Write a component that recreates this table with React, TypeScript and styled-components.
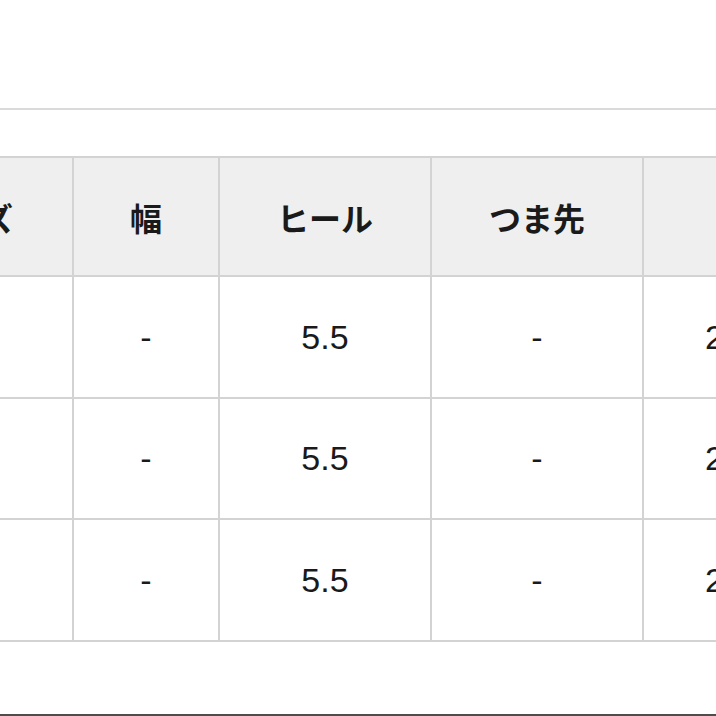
import React from 'react';
import styled, {createGlobalStyle} from 'styled-components';

const GlobalStyle = createGlobalStyle`
  html, body {
    margin: 0;
    padding: 0;
    background: #ffffff;
  }
  body {
    font-family: "Liberation Sans", "Noto Sans CJK JP", sans-serif;
    color: #1a1a1a;
  }
`;

const Page = styled.div`
  width: 716px;
  height: 716px;
  display: flex;
  flex-direction: column;
  overflow: hidden;
  background: #ffffff;
`;

const TopSpace = styled.div`
  height: 108px;
  flex-shrink: 0;
`;

const Rule = styled.div<{$color: string}>`
  height: 2px;
  flex-shrink: 0;
  background: ${p => p.$color};
`;

const TableWrap = styled.div`
  margin-top: 46px;
  width: 716px;
  overflow: hidden;
  flex-shrink: 0;
`;

const Grid = styled.div`
  display: grid;
  grid-template-columns: 215px 146px 212px 212px 190px;
  grid-template-rows: 119px 122px 121px 122px;
  width: max-content;
  margin-left: -141px;
  border-top: 2px solid #d3d3d3;
`;

const Cell = styled.div<{$head?: boolean}>`
  box-sizing: border-box;
  display: flex;
  align-items: center;
  justify-content: center;
  border-right: 2px solid #d3d3d3;
  border-bottom: 2px solid #d3d3d3;
  background: ${p => (p.$head ? '#efefef' : '#ffffff')};
  font-family: ${p => (p.$head
    ? '"Noto Sans CJK JP", "Liberation Sans", sans-serif'
    : '"Liberation Sans", "Noto Sans CJK JP", sans-serif')};
  font-size: ${p => (p.$head ? '32px' : '34px')};
  font-weight: ${p => (p.$head ? 700 : 400)};
  color: #1a1a1a;
  white-space: nowrap;
`;

const Filler = styled.div`
  flex: 1;
`;

const headers = ['サイズ', '幅', 'ヒール', 'つま先', '丈'];

const rows = [
  ['22.5', '-', '5.5', '-', '22.5'],
  ['23.5', '-', '5.5', '-', '23.5'],
  ['24.5', '-', '5.5', '-', '24.5'],
];

export default function App() {
  return (
    <Page>
      <GlobalStyle />
      <TopSpace />
      <Rule $color="#dadada" />
      <TableWrap>
        <Grid>
          {headers.map((h, i) => (
            <Cell $head key={`h${i}`}>{h}</Cell>
          ))}
          {rows.map((row, r) =>
            row.map((v, c) => <Cell key={`r${r}c${c}`}>{v}</Cell>)
          )}
        </Grid>
      </TableWrap>
      <Filler />
      <Rule $color="#4d4d4d" />
    </Page>
  );
}
